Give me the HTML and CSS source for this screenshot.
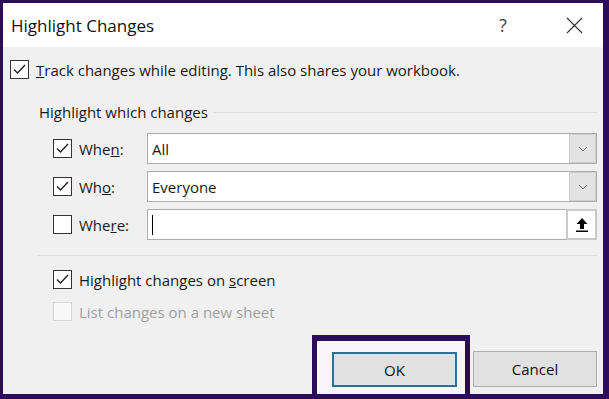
FILE: index.html
```html
<!DOCTYPE html>
<html lang="en">
  <head>
    <meta charset="UTF-8" />
    <title>Highlight Changes</title>
    <link rel="stylesheet" href="styles.css">
  </head>
  <body>
    <div class="dialog">
      <header class="titlebar">
        <h1 class="title">Highlight Changes</h1>
        <span class="help">?</span>
        <span class="close">
          <svg width="17" height="17" viewBox="0 0 17 17">
            <path d="M1 1 L16 16 M16 1 L1 16" stroke="#333" stroke-width="1.1" fill="none" />
          </svg>
        </span>
      </header>

      <main class="content">
        <label class="check-row">
          <span class="box">
            <svg width="17" height="17" viewBox="0 0 17 17"><path d="M3 8.5 L6.5 12 L14 4" stroke="#222" stroke-width="1.4" fill="none" /></svg>
          </span>
          <span><u>T</u>rack changes while editing. This also shares your workbook.</span>
        </label>

        <section class="group">
          <div class="group-title">
            <span>Highlight which changes</span>
            <span class="rule"></span>
          </div>

          <div class="fields">
            <label class="field-check">
              <span class="box">
                <svg width="17" height="17" viewBox="0 0 17 17"><path d="M3 8.5 L6.5 12 L14 4" stroke="#222" stroke-width="1.4" fill="none" /></svg>
              </span>
              <span>Whe<u>n</u>:</span>
            </label>
            <div class="combo">
              <span class="combo-text">All</span>
              <span class="drop">
                <svg width="10" height="6" viewBox="0 0 10 6"><path d="M1 1 L5 5 L9 1" stroke="#777" stroke-width="1" fill="none" /></svg>
              </span>
            </div>

            <label class="field-check">
              <span class="box">
                <svg width="17" height="17" viewBox="0 0 17 17"><path d="M3 8.5 L6.5 12 L14 4" stroke="#222" stroke-width="1.4" fill="none" /></svg>
              </span>
              <span>Wh<u>o</u>:</span>
            </label>
            <div class="combo">
              <span class="combo-text">Everyone</span>
              <span class="drop">
                <svg width="10" height="6" viewBox="0 0 10 6"><path d="M1 1 L5 5 L9 1" stroke="#777" stroke-width="1" fill="none" /></svg>
              </span>
            </div>

            <label class="field-check">
              <span class="box"></span>
              <span>Whe<u>r</u>e:</span>
            </label>
            <div class="combo">
              <span class="combo-text"><span class="caret"></span></span>
              <span class="pick">
                <svg width="12" height="14" viewBox="0 0 12 14">
                  <path d="M6 0 L11.5 6 L8 6 L8 11 L4 11 L4 6 L0.5 6 Z" fill="#000" />
                  <rect x="0" y="12.5" width="12" height="1.5" fill="#000" />
                </svg>
              </span>
            </div>
          </div>
        </section>

        <div class="options">
          <label class="check-row">
            <span class="box">
              <svg width="17" height="17" viewBox="0 0 17 17"><path d="M3 8.5 L6.5 12 L14 4" stroke="#222" stroke-width="1.4" fill="none" /></svg>
            </span>
            <span>Highlight changes on <u>s</u>creen</span>
          </label>
          <label class="check-row disabled">
            <span class="box"></span>
            <span>List changes on a new sheet</span>
          </label>
        </div>

        <footer class="buttons">
          <span class="marker">
            <button class="btn btn-default">OK</button>
          </span>
          <button class="btn">Cancel</button>
        </footer>
      </main>
    </div>
  </body>
</html>
```

FILE: styles.css
```css
* {
  box-sizing: border-box;
}

body {
  margin: 0;
  width: 609px;
  height: 399px;
  padding: 3px 6px 5px 3px;
  background: #2a0b5c;
  font-family: "Open Sans", sans-serif;
  color: #1a1a1a;
  overflow: hidden;
}

.dialog {
  height: 391px;
  background: #f0f0f0;
  display: flex;
  flex-direction: column;
}

.titlebar {
  height: 44px;
  background: #fff;
  display: flex;
  align-items: center;
  padding-left: 8px;
}

.title {
  flex: 1;
  margin: 0;
  font-size: 17px;
  font-weight: 400;
  color: #111;
}

.help {
  width: 20px;
  margin-right: 32px;
  text-align: center;
  font-size: 18px;
  color: #444;
}

.close {
  width: 58px;
  display: flex;
  justify-content: center;
}

.content {
  flex: 1;
  display: flex;
  flex-direction: column;
  padding: 13px 6px 0 7px;
  font-size: 15px;
}

.check-row {
  display: flex;
  align-items: center;
  gap: 7px;
  height: 19px;
}

.box {
  width: 19px;
  height: 19px;
  flex: none;
  border: 1px solid #333;
  background: #fff;
  display: flex;
  align-items: center;
  justify-content: center;
}

.group {
  margin: 23px 0 0 27px;
  padding: 0 0 15px 16px;
  border-bottom: 1px solid #dcdcdc;
}

.group-title {
  display: flex;
  align-items: center;
  gap: 5px;
  margin-left: -14px;
  height: 20px;
}

.rule {
  flex: 1;
  height: 1px;
  background: #dcdcdc;
}

.fields {
  display: grid;
  grid-template-columns: 94px 1fr;
  grid-auto-rows: 31px;
  row-gap: 7px;
  margin-top: 11px;
}

.field-check {
  display: flex;
  align-items: center;
  gap: 7px;
}

.combo {
  display: flex;
  align-items: center;
  background: #fff;
  border: 1px solid #ababab;
}

.combo-text {
  flex: 1;
  padding-left: 4px;
  display: flex;
  align-items: center;
}

.caret {
  width: 1px;
  height: 20px;
  background: #000;
}

.drop {
  width: 27px;
  height: 29px;
  background: #e3e3e3;
  border: 1px solid #cfcfcf;
  display: flex;
  align-items: center;
  justify-content: center;
}

.pick {
  width: 31px;
  height: 31px;
  margin: -1px -1px -1px 0;
  background: #fff;
  border: 2px solid #c9c9c9;
  display: flex;
  align-items: center;
  justify-content: center;
}

.options {
  display: flex;
  flex-direction: column;
  gap: 13px;
  margin: 14px 0 0 43px;
}

.disabled {
  color: #a0a0a0;
}

.disabled .box {
  border-color: #d4d4d4;
  background: #f9f9f9;
}

.buttons {
  margin-top: auto;
  display: flex;
  justify-content: flex-end;
  align-items: flex-end;
  gap: 3px;
}

.marker {
  border: 6px solid #2a0b5c;
  border-bottom: 0;
  border-left-width: 5px;
  border-right-width: 5px;
  padding: 11px 8px 7px 15px;
  background: #f8f5fa;
}

.btn {
  width: 124px;
  height: 36px;
  margin-bottom: 7px;
  font-family: "Open Sans", sans-serif;
  font-size: 15px;
  color: #111;
  background: #e1e1e1;
  border: 1px solid #adadad;
}

.marker .btn {
  margin-bottom: 0;
}

.btn-default {
  width: 125px;
  height: 35px;
  border: 2px solid #2f6f93;
  box-shadow: inset 0 0 0 1px #cde8f6;
}
```
